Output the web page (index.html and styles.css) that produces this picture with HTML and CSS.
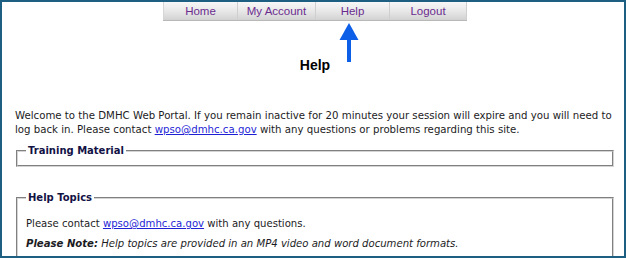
FILE: index.html
```html
<!DOCTYPE html>
<html lang="en">
<head>
	<meta charset="UTF-8">
	<title>Help</title>
	<link rel="stylesheet" href="styles.css">
</head>
<body>
	<div class="frame">
		<div class="nav">
			<a href="#" class="nav-item home">Home</a>
			<a href="#" class="nav-item account">My Account</a>
			<a href="#" class="nav-item help">Help</a>
			<a href="#" class="nav-item logout">Logout</a>
		</div>

		<svg class="arrow" width="24" height="42" viewBox="0 0 24 42">
			<polygon points="12,0 2.5,17 21.5,17" fill="#0d5fe8"/>
			<rect x="10" y="16" width="4" height="23" fill="#0d5fe8"/>
		</svg>

		<h1 class="title">Help</h1>

		<div class="content">
			<p class="welcome">Welcome to the DMHC Web Portal. If you remain inactive for 20 minutes your session will expire and you will need to log back in. Please contact <a href="#">wpso@dmhc.ca.gov</a> with any questions or problems regarding this site.</p>

			<fieldset class="box training">
				<legend>Training Material</legend>
			</fieldset>

			<fieldset class="box topics">
				<legend>Help Topics</legend>
				<p>Please contact <a href="#">wpso@dmhc.ca.gov</a> with any questions.</p>
				<p class="note"><b>Please Note:</b> Help topics are provided in an MP4 video and word document formats.</p>
			</fieldset>
		</div>
	</div>
</body>
</html>
```
FILE: styles.css
```css
body{
	margin: 0;
	background: #fff;
}

.frame{
	position: relative;
	width: 626px;
	height: 258px;
	box-sizing: border-box;
	border: 2px solid #1d5f82;
	overflow: hidden;
}

.nav{
	display: flex;
	margin-left: 161px;
	width: 304px;
	height: 19px;
	border-bottom: 1px solid #b8b8b8;
	box-sizing: border-box;
}

.nav-item{
	display: block;
	height: 100%;
	line-height: 18px;
	text-align: center;
	font-family: "Liberation Sans", Arial, sans-serif;
	font-size: 11.5px;
	color: #6a2b8f;
	text-decoration: none;
	background: linear-gradient(#f7f7f7, #e6e6e6 55%, #d2d2d2);
	border-right: 1px solid #cfcfcf;
	box-sizing: border-box;
}

.nav-item.home{
	width: 75px;
	border-left: 1px solid #d6d6d6;
}

.nav-item.account{
	width: 78px;
}

.nav-item.help{
	width: 74px;
}

.nav-item.logout{
	width: 77px;
}

.arrow{
	position: absolute;
	left: 335px;
	top: 21px;
}

.title{
	margin: 36px 0 0 0;
	padding-left: 4px;
	text-align: center;
	font-family: "Liberation Sans", Arial, sans-serif;
	font-size: 14px;
	line-height: 16px;
	color: #000;
}

.content{
	padding: 0 8px 0 13px;
	font-family: "DejaVu Sans", Verdana, sans-serif;
	font-size: 10.2px;
	line-height: 14px;
	color: #1c1c24;
}

.content a{
	color: #1f1fd6;
}

.welcome{
	margin: 36px 0 0 0;
}

.box{
	margin: 7px 2px 0 1px;
	padding: 0 8px 7px 8px;
	border: 2px groove #d4d4d4;
}

.box legend{
	padding: 0 2px;
	font-weight: bold;
	font-size: 10px;
	color: #121245;
}

.topics{
	margin-top: 24px;
	padding-top: 12px;
	font-size: 10.1px;
}

.topics p{
	margin: 0 0 6px 0;
}

.note{
	font-style: italic;
}
```
